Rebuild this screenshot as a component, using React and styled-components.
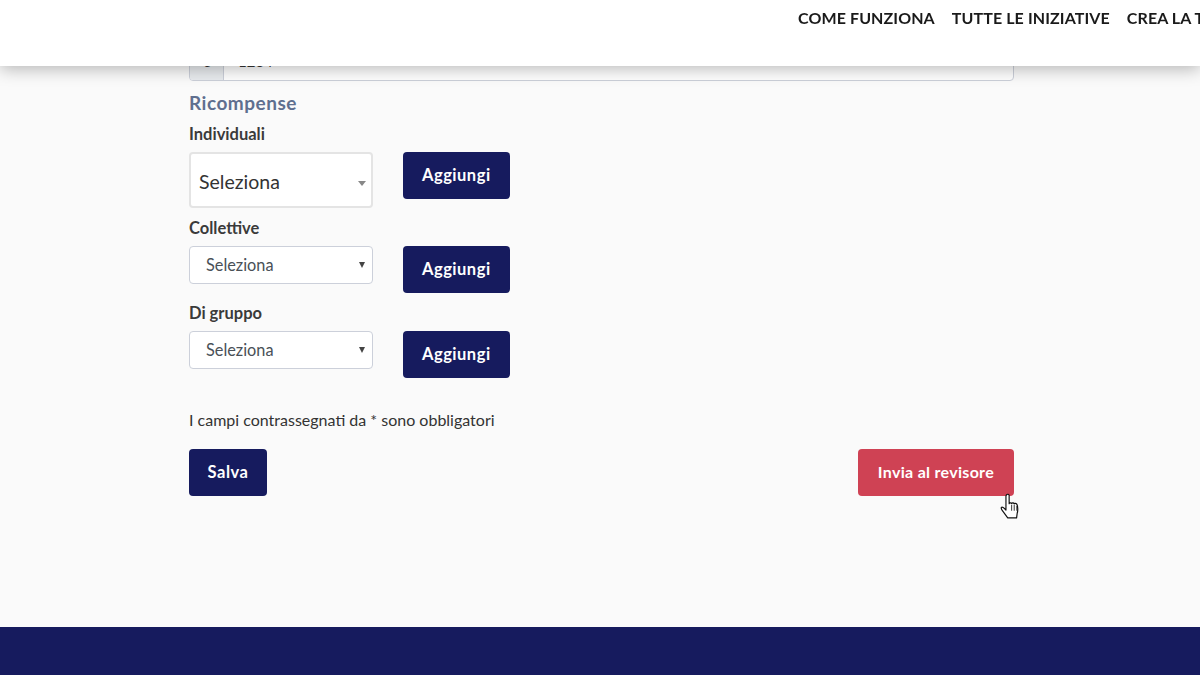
import React from 'react';
import styled, { createGlobalStyle } from 'styled-components';

const GlobalStyle = createGlobalStyle`
  html, body {
    margin: 0;
    padding: 0;
    height: 100%;
    overflow: hidden;
  }
  * {
    box-sizing: border-box;
  }
  body {
    background: #fafafa;
    font-family: Lato, "Open Sans", sans-serif;
    color: #333;
  }
`;

const Page = styled.div`
  display: flex;
  flex-direction: column;
  height: 675px;
  background: #fafafa;
`;

const Header = styled.header`
  position: fixed;
  top: 0;
  left: 0;
  right: 0;
  height: 66px;
  background: #fff;
  box-shadow: 0 3px 16px rgba(0, 0, 0, 0.28);
  z-index: 10;
  overflow: hidden;
`;

const Nav = styled.nav`
  display: flex;
  gap: 17px;
  padding: 8px 0 0 798px;
  white-space: nowrap;
`;

const NavLink = styled.a`
  font-size: 16px;
  letter-spacing: 0.1px;
  font-weight: 700;
  line-height: 20px;
  color: #1a1a1a;
`;

const Main = styled.main`
  flex: 1;
  width: 825px;
  margin-left: 189px;
  padding-top: 43px;
`;

const AmountGroup = styled.div`
  display: flex;
  height: 38px;
  border: 1px solid #ccd0da;
  border-radius: 4px;
  background: #fff;
  overflow: hidden;
`;

const AmountAddon = styled.span`
  width: 34px;
  background: #e9ecef;
  border-right: 1px solid #ccd0da;
  text-align: center;
  line-height: 36px;
  font-size: 14px;
`;

const AmountValue = styled.span`
  padding-left: 14px;
  line-height: 34px;
  font-size: 15px;
`;

const SectionTitle = styled.h3`
  margin: 11px 0 0;
  font-size: 19px;
  letter-spacing: 0.5px;
  line-height: 22px;
  font-weight: 700;
  color: #5f6f8f;
`;

const FieldLabel = styled.label`
  display: block;
  margin-top: 10px;
  font-size: 16.5px;
  font-weight: 700;
  line-height: 20px;
  color: #3a3a3a;
`;

const FieldRow = styled.div`
  display: flex;
  align-items: flex-start;
  gap: 30px;
  margin-top: 8px;
`;

const LargeSelect = styled.div`
  position: relative;
  width: 184px;
  height: 56px;
  padding-left: 8px;
  border: 2px solid #e4e4e4;
  border-radius: 4px;
  background: #fff;
  font-size: 19.5px;
  line-height: 55px;
  color: #333;

  &::after {
    content: '';
    position: absolute;
    right: 5px;
    top: 27px;
    border-left: 4px solid transparent;
    border-right: 4px solid transparent;
    border-top: 5px solid #888;
  }
`;

const SmallSelect = styled.div`
  position: relative;
  width: 184px;
  height: 38px;
  padding-left: 16px;
  border: 1px solid #ccd0da;
  border-radius: 4px;
  background: #fff;
  font-size: 16.3px;
  line-height: 35px;
  color: #495057;

  &::after {
    content: '';
    position: absolute;
    right: 7px;
    top: 15px;
    border-left: 3px solid transparent;
    border-right: 3px solid transparent;
    border-top: 6px solid #444;
  }
`;

const Button = styled.button`
  height: 47px;
  padding: 0 ${(p) => p.$pad}px 1px;
  border: none;
  border-radius: 4px;
  background: #161b5e;
  color: #fff;
  font-family: inherit;
  font-size: 16.5px;
  letter-spacing: 0.5px;
  font-weight: 700;
`;

const SaveButton = styled(Button)`
  width: 78px;
  padding: 0 0 1px;
`;

const SubmitButton = styled(Button)`
  padding-bottom: 3px;
  background: #cf4254;
  font-size: 16px;
  letter-spacing: 0.3px;
`;

const Note = styled.p`
  margin: 32px 0 0;
  font-size: 16px;
  line-height: 19px;
  color: #333;
`;

const Actions = styled.div`
  display: flex;
  justify-content: space-between;
  margin-top: 20px;
`;

const SubmitWrap = styled.div`
  position: relative;
`;

const Cursor = styled.svg`
  position: absolute;
  left: 142px;
  top: 44px;
  width: 19px;
  height: 26px;
`;

const Footer = styled.footer`
  height: 48px;
  background: #161b5e;
`;

const HandCursor = () => (
  <Cursor viewBox="0 0 16 22">
    <path
      d="M5.5 1.5c.8-.8 2-.5 2.2.7V9c0-.7 1.9-.9 2.1 0 0-.7 2-.9 2.2.2 0-.7 2-.6 2.2.4 1 1.4 1 5.800.3 7.500L14 21H6.500L2 15c-1-1.500-1.300-2.700-.7-3 .7-.4 1.700.2 3.700 2.400V2.500z"
      fill="#fff"
      stroke="#111"
      strokeWidth="1"
      strokeLinejoin="round"
    />
    <path d="M9.800 10v5M12 10v5M14.200 11v4" stroke="#111" strokeWidth="0.700" />
  </Cursor>
);

const App = () => (
  <Page>
    <GlobalStyle />
    <Header>
      <Nav>
        <NavLink>COME FUNZIONA</NavLink>
        <NavLink>TUTTE LE INIZIATIVE</NavLink>
        <NavLink>CREA LA TUA</NavLink>
      </Nav>
    </Header>
    <Main>
      <AmountGroup>
        <AmountAddon>€</AmountAddon>
        <AmountValue>1234</AmountValue>
      </AmountGroup>
      <SectionTitle>Ricompense</SectionTitle>
      <FieldLabel>Individuali</FieldLabel>
      <FieldRow>
        <LargeSelect>Seleziona</LargeSelect>
        <Button $pad={19}>Aggiungi</Button>
      </FieldRow>
      <FieldLabel>Collettive</FieldLabel>
      <FieldRow>
        <SmallSelect>Seleziona</SmallSelect>
        <Button $pad={19}>Aggiungi</Button>
      </FieldRow>
      <FieldLabel>Di gruppo</FieldLabel>
      <FieldRow>
        <SmallSelect>Seleziona</SmallSelect>
        <Button $pad={19}>Aggiungi</Button>
      </FieldRow>
      <Note>I campi contrassegnati da * sono obbligatori</Note>
      <Actions>
        <SaveButton>Salva</SaveButton>
        <SubmitWrap>
          <SubmitButton $pad={20}>Invia al revisore</SubmitButton>
          <HandCursor />
        </SubmitWrap>
      </Actions>
    </Main>
    <Footer />
  </Page>
);

export default App;
